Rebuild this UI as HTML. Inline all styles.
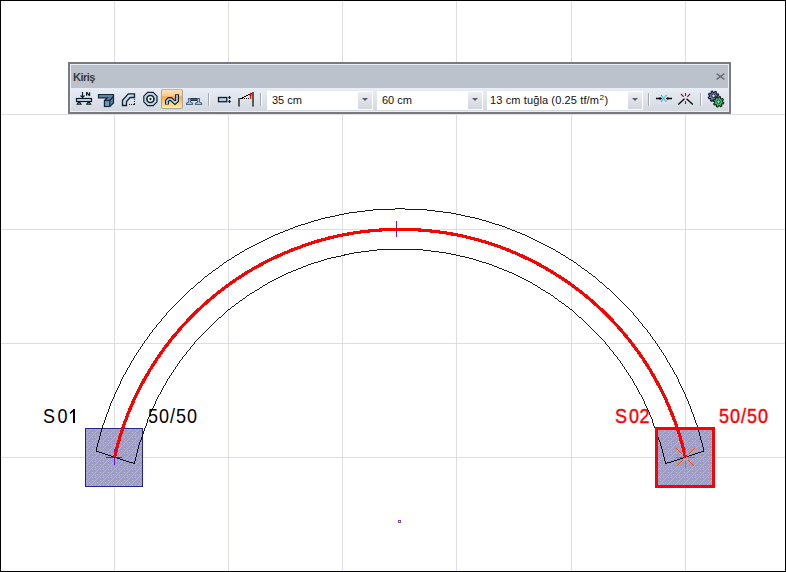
<!DOCTYPE html>
<html><head><meta charset="utf-8">
<style>
html,body{margin:0;padding:0;width:786px;height:572px;overflow:hidden;background:#fff;}
body{position:relative;font-family:"Liberation Sans",sans-serif;}
#cv{position:absolute;left:0;top:0;}
.tb{position:absolute;left:68px;top:62px;width:663px;height:52px;background:#7a7a7a;}
.tbi{position:absolute;left:2px;top:2px;width:659px;height:48px;background:#eaeef6;}
.ttl{position:absolute;left:1px;top:1px;width:657px;height:23px;background:#bcc2cc;}
.ttl .t{position:absolute;left:2px;top:6px;font-size:11px;font-weight:bold;color:#3a3a3a;letter-spacing:-0.5px;}
.row{position:absolute;left:1px;top:24px;width:657px;height:23px;background:linear-gradient(#e9edf6,#d4d8e0);}
.ic{position:absolute;}
.sep{position:absolute;top:5px;width:1px;height:13px;background:#a2a6ae;box-shadow:1px 0 0 #fff;}
.dd{position:absolute;top:3px;height:19px;background:#fff;}
.dd .tx{position:absolute;left:5px;top:3px;font-size:11px;color:#101010;white-space:nowrap;}
.dd .ar{position:absolute;right:1px;top:1px;width:14px;height:17px;background:linear-gradient(#eceef2,#d2d6de);}
.dd .ar:after{content:"";position:absolute;left:4px;top:6px;border-left:3px solid transparent;border-right:3px solid transparent;border-top:3px solid #5c5e64;}
</style></head><body>
<svg id="cv" width="786" height="572" viewBox="0 0 786 572">
<defs>
<pattern id="hatch" width="8" height="8" patternUnits="userSpaceOnUse">
<rect width="8" height="8" fill="#9d9dc7"/>
<path d="M0 7h1v1h-1zM1 6h1v1h-1zM2 5h1v1h-1zM3 4h1v1h-1zM4 3h1v1h-1zM5 2h1v1h-1zM6 1h1v1h-1zM7 0h1v1h-1zM4 0h1v1h-1zM1 2h1v1h-1zM7 3h1v1h-1zM4 5h1v1h-1zM7 5h1v1h-1z" fill="#babab5" shape-rendering="crispEdges"/>
</pattern>
</defs>
<rect x="0" y="0" width="786" height="572" fill="#fff"/>
<g stroke="#dcdcea" stroke-width="1" shape-rendering="crispEdges">
<path d="M114.5 0V572M228.5 0V572M342.5 0V572M456.5 0V572M571.5 0V572M685.5 0V572"/>
<path d="M0 114.5H786M0 229.5H786M0 343.5H786M0 457.5H786"/>
</g>
<!-- columns -->
<rect x="85.5" y="428.5" width="57" height="58" fill="url(#hatch)" stroke="#24248a" stroke-width="1" shape-rendering="crispEdges"/>
<rect x="656.5" y="428.5" width="57" height="58" fill="url(#hatch)" stroke="none"/>
<!-- labels -->
<g font-family="Liberation Sans" font-size="20">
<text transform="translate(43,423) scale(0.9,1)" fill="#000">S</text><text transform="translate(57.6,423) scale(0.9,1)" fill="#000">0</text>
<path d="M73 409H75V423H73Z M73.4 409.1L74.4 410.4L70.5 413.9L69.7 412.7Z" fill="#000"/>
<text transform="translate(148,423) scale(0.9,1)" fill="#000">5</text><text transform="translate(159,423) scale(0.9,1)" fill="#000">0</text><text transform="translate(170,423) scale(0.9,1)" fill="#000">/</text><text transform="translate(176,423) scale(0.9,1)" fill="#000">5</text><text transform="translate(187,423) scale(0.9,1)" fill="#000">0</text>
<text transform="translate(615,423) scale(0.9,1)" fill="#ff0000" stroke="#ff0000" stroke-width="0.4">S</text><text transform="translate(629,423) scale(0.9,1)" fill="#ff0000" stroke="#ff0000" stroke-width="0.4">0</text><text transform="translate(639.5,423) scale(0.9,1)" fill="#ff0000" stroke="#ff0000" stroke-width="0.4">2</text>
<text transform="translate(719,423) scale(0.9,1)" fill="#ff0000" stroke="#ff0000" stroke-width="0.4">5</text><text transform="translate(730,423) scale(0.9,1)" fill="#ff0000" stroke="#ff0000" stroke-width="0.4">0</text><text transform="translate(741,423) scale(0.9,1)" fill="#ff0000" stroke="#ff0000" stroke-width="0.4">/</text><text transform="translate(747,423) scale(0.9,1)" fill="#ff0000" stroke="#ff0000" stroke-width="0.4">5</text><text transform="translate(758,423) scale(0.9,1)" fill="#ff0000" stroke="#ff0000" stroke-width="0.4">0</text>
</g>
<!-- markers -->
<g stroke="#6a10f0" stroke-width="1" shape-rendering="crispEdges">
<path d="M106 457.5H122M114.5 449V465"/>
<path d="M396.5 221V237"/>
</g>
<!-- beam outlines -->
<g fill="none" stroke="#000" stroke-width="0.9" shape-rendering="crispEdges">
<path d="M95.91 450.99 A312 312 0 0 1 704.09 450.99 L665.71 463.59 A271.8 271.8 0 0 0 134.29 463.59 Z"/>
</g>
<!-- red centre -->
<path d="M114.5 457.5 A292.7 292.7 0 0 1 685.5 457.5" fill="none" stroke="#ff0000" stroke-width="3.2" shape-rendering="crispEdges"/>
<rect x="656.5" y="428.5" width="57" height="58" fill="none" stroke="#ff0000" stroke-width="3" shape-rendering="crispEdges"/>
<g stroke="#ff4808" stroke-width="1.2" shape-rendering="crispEdges">
<path d="M676 457.5H683M688 457.5H695M685.5 448V454.5M685.5 460.5V467.5M676.5 448.5L682.5 454.5M688.5 460.5L694.5 466.5M694.5 448.5L688.5 454.5M682.5 460.5L676.5 466.5"/>
</g>
<rect x="398.5" y="520.5" width="2" height="2" fill="none" stroke="#8442cc" stroke-width="1" shape-rendering="crispEdges"/>

<rect x="0.5" y="0.5" width="785" height="571" fill="none" stroke="#000" stroke-width="1" shape-rendering="crispEdges"/>
</svg>

<div class="tb"><div class="tbi">
<div class="ttl"><span class="t">Kiriş</span>
<svg class="ic" style="left:645px;top:8px" width="9" height="7" viewBox="0 0 9 7"><path d="M0.6 0.6L8.4 6.4M8.4 0.6L0.6 6.4" stroke="#6e6e6e" stroke-width="1.4"/></svg>
</div>
<div class="row">
<div class="sep" style="left:137px"></div>
<div class="sep" style="left:189px"></div>
<div class="dd" style="left:196px;width:106px"><span class="tx">35 cm</span><span class="ar"></span></div>
<div class="dd" style="left:306px;width:106px"><span class="tx">60 cm</span><span class="ar"></span></div>
<div class="dd" style="left:416px;width:156px"><span class="tx" style="left:3px;letter-spacing:0.12px">13 cm tuğla (0.25 tf/m<span style="font-size:8px;position:relative;top:-4px;margin-left:0.5px;margin-right:0.5px">2</span>)</span><span class="ar"></span></div>
<div class="sep" style="left:577px"></div>
<div class="sep" style="left:629px"></div>
</div>
</div></div>

<svg id="icons" style="position:absolute;left:0;top:0" width="786" height="572" viewBox="0 0 786 572">
<defs>
<linearGradient id="selg" x1="0" y1="0" x2="0" y2="1">
<stop offset="0" stop-color="#fde2ba"/><stop offset="0.3" stop-color="#fdcf94"/><stop offset="0.4" stop-color="#fbaa48"/><stop offset="0.7" stop-color="#fdd27c"/><stop offset="1" stop-color="#fee99a"/>
</linearGradient>
</defs>
<!-- icon1 beam with load -->
<g>
<path d="M82.5 92V97.5" stroke="#0e1e2a" stroke-width="1.2"/>
<path d="M80.5 95.5L82.5 97.5L84.5 95.5" fill="none" stroke="#0e1e2a" stroke-width="1.1"/>
<path d="M86.6 95.8V92.2L89.6 95.8V92.2" fill="none" stroke="#0e1e2a" stroke-width="1.2" stroke-linejoin="bevel"/>
<rect x="76.5" y="98.5" width="15" height="3" fill="#c6def2" stroke="#0c1a26" stroke-width="1.2"/>
<path d="M78.3 101.5H79.9L82 104.7H76.2Z M87.9 101.5H89.5L91.6 104.7H85.8Z" fill="#0c1a26"/><path d="M78.2 103.6H80M87.8 103.6H89.6" stroke="#7a8ea0" stroke-width="0.9"/>
</g>
<!-- icon2 3d beam -->
<g stroke="#15283a" stroke-width="1.2" stroke-linejoin="miter">
<path d="M98.5 94.5H113.5V103L109.8 106.5H104.5V100.5L107.5 97.8H98.5Z" fill="#5b83a2"/>
<rect x="104.5" y="100.5" width="5.3" height="6" fill="#6f9cb4"/>
<path d="M109.8 100.5L113.5 96.2" fill="none"/>
</g>
<!-- icon3 bent beam -->
<g>
<path d="M122.5 105.5V100.3L128.3 93.8H134.5V97.5H130.2L126.5 101.5V105.5Z" fill="#c2daf0" stroke="#12222e" stroke-width="1.3"/>
<path d="M134 99h1v1h-1z M134 101h1v1h-1z M134 103h1v2h-1z M129 104h1v1h-1z M131 104h1v1h-1z M133 104h1v1h-1z" fill="#1a2a36" shape-rendering="crispEdges"/>
</g>
<!-- icon4 target -->
<g stroke="#142430">
<path d="M147.6 92.4H153.2L157 96.2V101.8L153.2 105.6H147.6L143.8 101.8V96.2Z" fill="#bed5ec" stroke-width="1.2"/>
<circle cx="150.4" cy="99" r="3.5" fill="#fff" stroke-width="1.7"/>
<path d="M149.2 99H151.8M150.5 97.7V100.3" stroke-width="1.2"/>
</g>
<!-- icon5 selected -->
<rect x="161.5" y="89.5" width="21" height="19" rx="1.5" fill="url(#selg)" stroke="#a9a59c" stroke-width="1"/>
<path d="M162 89.5H182" stroke="#d4b58a" stroke-width="1"/>
<path d="M163 107.5H181" stroke="#fdf4d0" stroke-width="1"/>
<path d="M167 104.6V100.8L168.8 99H171L175 102.6L177 100.8V94.3" fill="none" stroke="#0e1c2a" stroke-width="3.9" stroke-linejoin="miter"/>
<path d="M167 104V100.8L168.8 99H171L175 102.6L177 100.8V95" fill="none" stroke="#b8d0e8" stroke-width="1.7" stroke-linejoin="miter"/>
<!-- icon6 supports -->
<g>
<rect x="190" y="98" width="8" height="3" fill="#1e3248"/>
<path d="M191.5 99.5H196.5" stroke="#5a7088" stroke-width="0.8"/>
<path d="M188.5 98.5H190.5V102.2L192.6 103.2V104.5H186.5V103.2L188.5 102.2Z M197.5 98.5H199.5V102.2L201.6 103.2V104.5H195.5V103.2L197.5 102.2Z" fill="#b4cce2" stroke="#4f6a86" stroke-width="1.1"/>
</g>
<!-- icon7 rect arrows -->
<g>
<rect x="218.5" y="97.5" width="8.3" height="4.2" fill="#b6cfe6" stroke="#0c1e2c" stroke-width="1.3"/>
<path d="M228.2 97.5H230.8M229.5 96V99M228.2 101.5H230.8M229.5 100V103" stroke="#0c1e2c" stroke-width="1.2"/>
</g>
<!-- icon8 frame slope -->
<g>
<rect x="238" y="98" width="2" height="8.6" fill="#5a5a50"/>
<rect x="252" y="92" width="2" height="14.6" fill="#5a5a50"/>
<path d="M240 98h1.6v1h-1.6z M242 97h1.6v1h-1.6z M244 96h1.6v1h-1.6z M246 95h1.6v1h-1.6z M248 94h1.6v1h-1.6z M250 93h1.6v1h-1.6z" fill="#000" shape-rendering="crispEdges"/>
<path d="M242 98h1v1h-1z M244 98h1v1h-1z M246 98h1v1h-1z M248 98h1v1h-1z" fill="#000" shape-rendering="crispEdges"/>
<path d="M250.6 98.8V94.8" stroke="#ff0000" stroke-width="1.3"/>
<path d="M248.9 95.6L250.6 92.6L252.3 95.6Z" fill="#ff0000"/>
</g>
<!-- icon9 -->
<g>
<path d="M656 98.5H661.5M666.5 98.5H672" stroke="#000" stroke-width="1.3"/>
<path d="M659.6 97L662 98.5L659.6 100Z M668.4 97L666 98.5L668.4 100Z" fill="#000"/>
<path d="M661 95.2L666.5 101.8M666.5 95.2L661 101.8" stroke="#12a4d4" stroke-width="1.2" stroke-dasharray="1.2 0.6"/>
</g>
<!-- icon10 -->
<g>
<path d="M678.3 104.5L684.5 98.8M686.5 98.8L692.8 104.5" stroke="#000" stroke-width="1.3"/>
<path d="M685.5 93V96M685.5 101V104M681 94L683.7 96.8M690 94L687.3 96.8" stroke="#9c0c18" stroke-width="1.1"/>
</g>
<!-- icon11 gears -->
<g>
<path d="M717.32 97.07L718.53 97.96L717.90 99.26L716.46 98.84L715.65 99.55L715.89 101.03L714.51 101.50L713.79 100.19L712.73 100.12L711.84 101.33L710.54 100.70L710.96 99.26L710.25 98.45L708.77 98.69L708.30 97.31L709.61 96.59L709.68 95.53L708.47 94.64L709.10 93.34L710.54 93.76L711.35 93.05L711.11 91.57L712.49 91.10L713.21 92.41L714.27 92.48L715.16 91.27L716.46 91.90L716.04 93.34L716.75 94.15L718.23 93.91L718.70 95.29L717.39 96.01Z" fill="#76829e" stroke="#15163a" stroke-width="1.1" stroke-linejoin="round"/>
<circle cx="713.5" cy="95.8" r="1.8" fill="#d8dce8" stroke="#1c1c40" stroke-width="1"/>
<path d="M722.40 101.80L723.76 102.42L723.40 103.83L721.90 103.71L721.26 104.56L721.78 105.96L720.53 106.70L719.56 105.55L718.50 105.70L717.88 107.06L716.47 106.70L716.59 105.20L715.74 104.56L714.34 105.08L713.60 103.83L714.75 102.86L714.60 101.80L713.24 101.18L713.60 99.77L715.10 99.89L715.74 99.04L715.22 97.64L716.47 96.90L717.44 98.05L718.50 97.90L719.12 96.54L720.53 96.90L720.41 98.40L721.26 99.04L722.66 98.52L723.40 99.77L722.25 100.74Z" fill="#3fbf6c" stroke="#0c2414" stroke-width="1.1" stroke-linejoin="round"/>
<circle cx="718.5" cy="101.8" r="1.7" fill="#a6d0c4" stroke="#14301c" stroke-width="0.8"/>
</g>
</svg>
</body></html>
